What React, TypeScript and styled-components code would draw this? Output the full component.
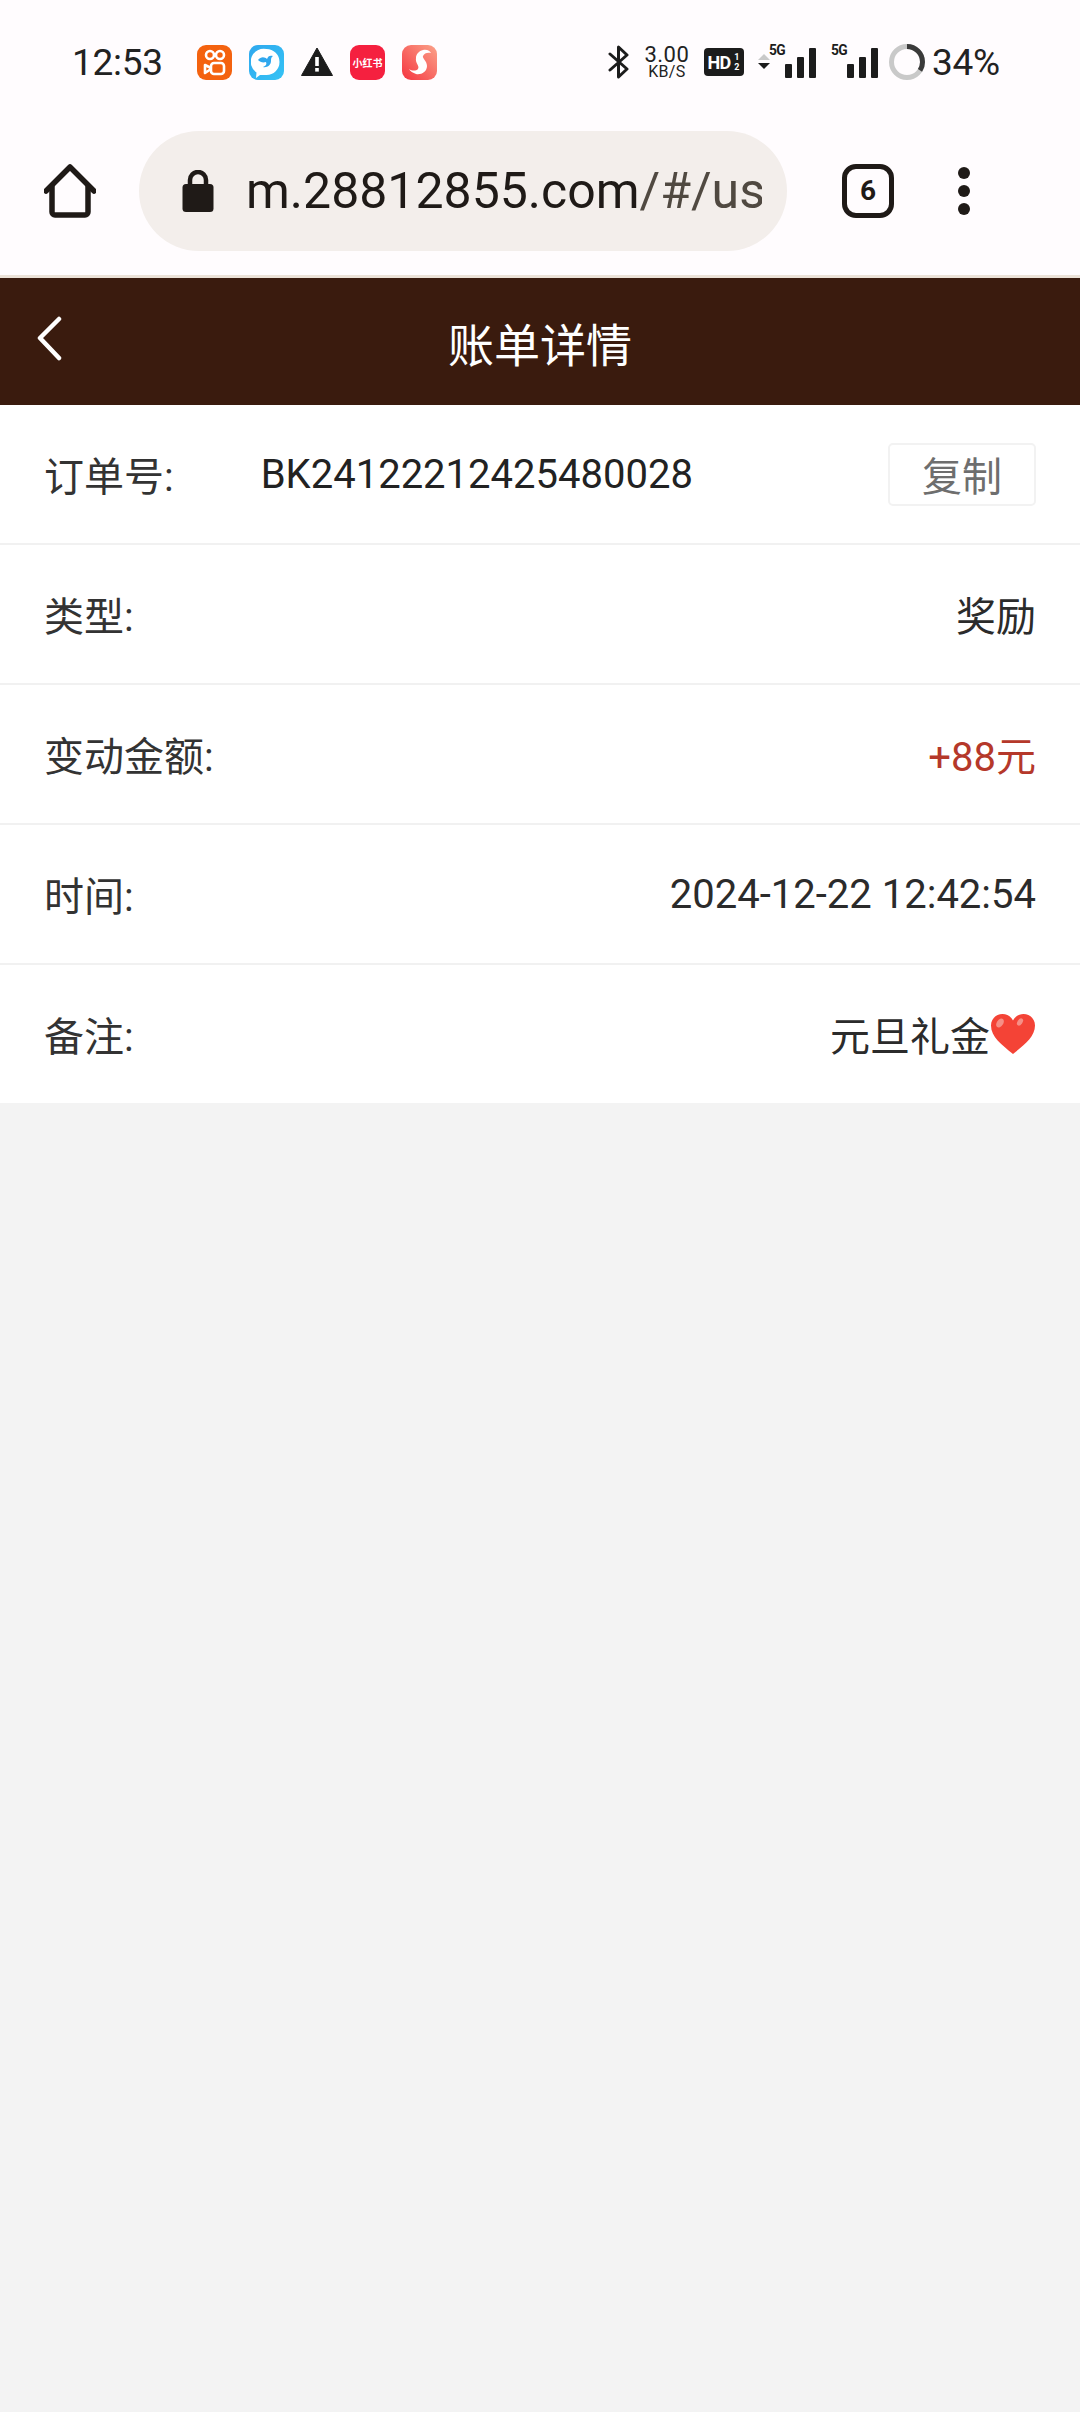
import React from "react";
import styled, { createGlobalStyle } from "styled-components";

const GlobalStyle = createGlobalStyle`
  html, body {
    margin: 0;
    padding: 0;
    background: #f3f3f3;
    font-family: Roboto, "Noto Sans CJK SC", sans-serif;
  }
`;

const Page = styled.div`
  width: 1080px;
  height: 2412px;
  overflow: hidden;
  display: flex;
  flex-direction: column;
  background: #f3f3f3;
`;

const Chrome = styled.div`
  background: #fffcfe;
  border-bottom: 3px solid #ece2d8;
`;

const StatusBar = styled.div`
  height: 88px;
  padding-top: 18px;
  display: flex;
  align-items: center;
  color: #1c1c1c;
`;

const Clock = styled.span`
  margin-left: 72px;
  width: 125px;
  font-size: 37px;
  letter-spacing: -0.3px;
  color: #222;
`;

const AppIcons = styled.div`
  display: flex;
  align-items: center;
  gap: 17px;
`;

const AppTile = styled.div<{ $bg: string }>`
  width: 35px;
  height: 35px;
  border-radius: 9px;
  background: ${(p) => p.$bg};
  display: flex;
  align-items: center;
  justify-content: center;
  overflow: hidden;
  color: #fff;
  font-size: 10px;
  font-weight: 700;
  white-space: nowrap;
`;

const StatusRight = styled.div`
  margin-left: auto;
  margin-right: 80px;
  display: flex;
  align-items: center;
`;

const Speed = styled.div`
  margin-left: 13px;
  width: 50px;
  display: flex;
  flex-direction: column;
  align-items: center;
  line-height: 1;
  color: #222;
  span:first-child {
    font-size: 22px;
    height: 20px;
    letter-spacing: 0.5px;
  }
  span:last-child {
    font-size: 16px;
    letter-spacing: 0.3px;
  }
`;

const HdBadge = styled.div`
  margin-left: 12px;
  width: 40px;
  height: 28px;
  border-radius: 4px;
  background: #1c1c1c;
  color: #fff;
  display: flex;
  align-items: center;
  justify-content: center;
  font-size: 18px;
  font-weight: 700;
  letter-spacing: -0.8px;
  small {
    font-size: 9px;
    line-height: 10px;
    width: 8px;
    margin-left: 2px;
    text-align: center;
  }
`;

const Signal = styled.div<{ $gap: number }>`
  margin-left: ${(p) => p.$gap}px;
  position: relative;
  width: 45px;
  height: 32px;
  display: flex;
  align-items: flex-end;
  justify-content: flex-end;
  gap: 5px;
`;

const SignalTag = styled.span`
  position: absolute;
  left: -2px;
  top: -3px;
  font-size: 15px;
  line-height: 15px;
  font-weight: 700;
  letter-spacing: -0.6px;
  transform: scaleX(0.92);
  transform-origin: left top;
  color: #1c1c1c;
`;

const Bar = styled.i<{ $h: number }>`
  display: block;
  width: 7px;
  height: ${(p) => p.$h}px;
  background: #1c1c1c;
  border-radius: 1px;
`;

const Percent = styled.span`
  margin-left: 7px;
  font-size: 37px;
  letter-spacing: -0.2px;
  color: #222;
`;

const Toolbar = styled.div`
  height: 169px;
  display: flex;
  align-items: center;
  padding-left: 44px;
`;

const Pill = styled.div`
  margin-left: 43px;
  width: 648px;
  height: 120px;
  border-radius: 60px;
  background: #f3eeeb;
  display: flex;
  align-items: center;
  padding-left: 43px;
  box-sizing: border-box;
`;

const Url = styled.div`
  margin-left: 32px;
  width: 516px;
  overflow: hidden;
  white-space: nowrap;
  font-size: 50px;
  color: #1f1a17;
  span {
    color: #504941;
  }
`;

const TabCount = styled.div`
  margin-left: 55px;
  width: 52px;
  height: 54px;
  box-sizing: border-box;
  border: 5px solid #1f1a17;
  border-radius: 14px;
  display: flex;
  align-items: center;
  justify-content: center;
  font-size: 28px;
  font-weight: 700;
  color: #1f1a17;
  transform: none;
`;

const Dots = styled.div`
  margin-left: 64px;
  display: flex;
  flex-direction: column;
  gap: 6px;
  i {
    display: block;
    width: 12px;
    height: 12px;
    border-radius: 50%;
    background: #1f1a17;
  }
`;

const Header = styled.div`
  position: relative;
  height: 127px;
  background: #3a1b0e;
  display: flex;
  align-items: center;
  justify-content: center;
  color: #fff;
  font-size: 46px;
`;

const BackButton = styled.div`
  position: absolute;
  left: 36px;
  top: 38px;
  width: 28px;
  height: 46px;
`;

const List = styled.div`
  background: #fff;
`;

const Row = styled.div`
  height: 138px;
  padding: 0 44px;
  display: flex;
  align-items: center;
  border-bottom: 2px solid #f1f1f1;
  font-size: 40px;
  color: #333;
  &:last-child {
    border-bottom: 0;
  }
`;

const Label = styled.span`
  flex: none;
`;

const OrderNo = styled.span`
  margin-left: 87px;
  font-size: 40px;
  color: #222;
`;

const Value = styled.span<{ $accent?: boolean }>`
  margin-left: auto;
  display: flex;
  align-items: center;
  color: ${(p) => (p.$accent ? "#b5382a" : "#2b2b2b")};
`;

const CopyButton = styled.div`
  margin-left: auto;
  width: 148px;
  height: 63px;
  box-sizing: border-box;
  border: 2px solid #f2f2f2;
  border-radius: 5px;
  display: flex;
  align-items: center;
  justify-content: center;
  font-size: 40px;
  color: #6e6e6e;
`;

const HomeIcon = () => (
  <svg width="52" height="54" viewBox="0 0 52 54" fill="none" stroke="#1f1a17" strokeWidth="5.5" strokeLinecap="round" strokeLinejoin="round">
    <path d="M2 27 26 3l24 24" />
    <path d="M8 23v25a3 3 0 0 0 3 3h30a3 3 0 0 0 3-3V23" />
  </svg>
);

const LockIcon = () => (
  <svg width="32" height="42" viewBox="0 0 32 42">
    <path d="M8 16V10a8 8 0 0 1 16 0v6" fill="none" stroke="#1f1a17" strokeWidth="4.5" />
    <rect x="0.5" y="14" width="31" height="28" rx="3.5" fill="#1f1a17" />
  </svg>
);

const BackIcon = () => (
  <svg width="28" height="46" viewBox="0 0 28 46" fill="none" stroke="#fff" strokeWidth="4.5" strokeLinecap="round" strokeLinejoin="round">
    <path d="M23 3 4 22l19 20" />
  </svg>
);

const KuaishouIcon = () => (
  <svg width="24" height="27" viewBox="0 0 24 27" fill="none" stroke="#fff" strokeWidth="2.6">
    <circle cx="7" cy="6" r="4" />
    <circle cx="17" cy="6" r="4" />
    <rect x="8" y="14" width="13" height="11" rx="3" />
    <path d="M8 20 2 24v-8l6 3" strokeLinejoin="round" />
  </svg>
);

const BirdIcon = () => (
  <svg width="31" height="31" viewBox="0 0 31 31">
    <path d="M15.5 2a13 13 0 0 1 0 26H9l-4 3 .5-5.500A13 13 0 0 1 15.500 2z" fill="#fff" />
    <path d="M7 13c3-4 7-3 9-1 1-3 3-4 6-3-2 1-2 3-2 5 0 4-4 7-8 6 3-1 4-3 3-5-3 1-6 0-8-2z" fill="#2fa8ee" />
  </svg>
);

const WarningIcon = () => (
  <svg width="32" height="30" viewBox="0 0 32 30">
    <path d="M16 1 31.500 28.500H.5z" fill="#1c1c1c" stroke="#1c1c1c" strokeLinejoin="round" />
    <rect x="14.200" y="10" width="3.600" height="9" fill="#fff" />
    <rect x="14.200" y="21" width="3.600" height="3.600" fill="#fff" />
  </svg>
);

const SwirlIcon = () => (
  <svg width="24" height="27" viewBox="0 0 24 27">
    <path d="M15 1c4-1 7 1 8 3-3-1-7 0-8 3-1 2 4 5 4 10 0 6-6 9-11 8-3-1-6-3-7-5 3 2 7 2 9 0 2-3-3-6-2-11 0-4 3-7 7-8z" fill="#fff" />
  </svg>
);

const BluetoothIcon = () => (
  <svg width="21" height="34" viewBox="0 0 21 34" fill="none" stroke="#1c1c1c" strokeWidth="3" strokeLinecap="round" strokeLinejoin="round">
    <path d="M2 9 19 24l-8.500 8V2L19 10 2 25" />
  </svg>
);

const ArrowsIcon = () => (
  <svg width="12" height="16" viewBox="0 0 12 16">
    <path d="M6 0l6 6H0z" fill="#c9c9c9" />
    <path d="M6 15l6-6H0z" fill="#1c1c1c" />
  </svg>
);

const BatteryRing = () => (
  <svg width="36" height="36" viewBox="0 0 36 36" fill="none" strokeWidth="5">
    <circle cx="18" cy="18" r="15.500" stroke="#c9c9c9" />
    <circle cx="18" cy="18" r="15.500" stroke="#3a3a3a" strokeDasharray="33.100 97.400" transform="rotate(-90 18 18)" />
  </svg>
);

const HeartIcon = () => (
  <svg width="46" height="42" viewBox="0 0 46 42">
    <path d="M23 41C12 32 1 24 1 12.500 1 5.500 6.500 1 12.500 1 17 1 21 3.500 23 7.500 25 3.500 29 1 33.500 1 39.500 1 45 5.500 45 12.500 45 24 34 32 23 41z" fill="#f44336" />
    <ellipse cx="10" cy="10" rx="3.200" ry="5" transform="rotate(35 10 10)" fill="#f58f86" />
    <ellipse cx="30" cy="9" rx="2.400" ry="4" transform="rotate(35 30 9)" fill="#f58f86" />
  </svg>
);

const App = () => {
  return (
    <Page>
      <GlobalStyle />
      <Chrome>
        <StatusBar>
          <Clock>12:53</Clock>
          <AppIcons>
            <AppTile $bg="#f4620f">
              <KuaishouIcon />
            </AppTile>
            <AppTile $bg="linear-gradient(135deg, #2fa8ee, #35c3f5)">
              <BirdIcon />
            </AppTile>
            <WarningIcon />
            <AppTile $bg="#f5203f">小红书</AppTile>
            <AppTile $bg="linear-gradient(45deg, #f5343f, #fba38a)">
              <SwirlIcon />
            </AppTile>
          </AppIcons>
          <StatusRight>
            <BluetoothIcon />
            <Speed>
              <span>3.00</span>
              <span>KB/S</span>
            </Speed>
            <HdBadge>
              HD
              <small>
                1<br />2
              </small>
            </HdBadge>
            <div style={{ width: 14 }} />
            <ArrowsIcon />
            <Signal $gap={1}>
              <SignalTag>5G</SignalTag>
              <Bar $h={14} />
              <Bar $h={21} />
              <Bar $h={30} />
            </Signal>
            <Signal $gap={17}>
              <SignalTag>5G</SignalTag>
              <Bar $h={14} />
              <Bar $h={21} />
              <Bar $h={30} />
            </Signal>
            <div style={{ width: 11 }} />
            <BatteryRing />
            <Percent>34%</Percent>
          </StatusRight>
        </StatusBar>
        <Toolbar>
          <HomeIcon />
          <Pill>
            <LockIcon />
            <Url>
              m.28812855.com<span>/#/user/bill</span>
            </Url>
          </Pill>
          <TabCount>6</TabCount>
          <Dots>
            <i />
            <i />
            <i />
          </Dots>
        </Toolbar>
      </Chrome>
      <Header>
        <BackButton>
          <BackIcon />
        </BackButton>
        账单详情
      </Header>
      <List>
        <Row>
          <Label>订单号:</Label>
          <OrderNo>BK24122212425480028</OrderNo>
          <CopyButton>复制</CopyButton>
        </Row>
        <Row>
          <Label>类型:</Label>
          <Value>奖励</Value>
        </Row>
        <Row>
          <Label>变动金额:</Label>
          <Value $accent>+88元</Value>
        </Row>
        <Row>
          <Label>时间:</Label>
          <Value>2024-12-22 12:42:54</Value>
        </Row>
        <Row>
          <Label>备注:</Label>
          <Value>
            元旦礼金
            <HeartIcon />
          </Value>
        </Row>
      </List>
    </Page>
  );
};

export default App;
